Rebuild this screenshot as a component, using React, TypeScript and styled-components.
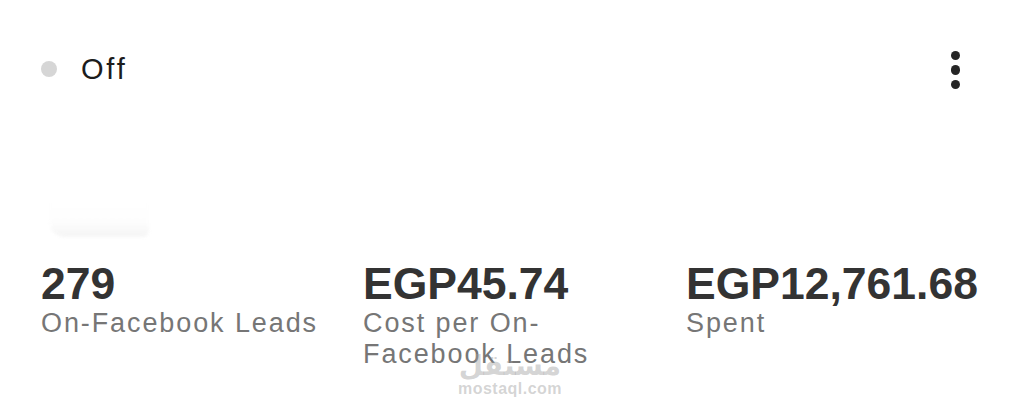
import styled, { createGlobalStyle } from "styled-components";

const GlobalStyle = createGlobalStyle`
  html, body {
    margin: 0;
    padding: 0;
    background: #ffffff;
  }
  body {
    font-family: "Liberation Sans", Arial, sans-serif;
    -webkit-font-smoothing: antialiased;
  }
`;

const Card = styled.div`
  position: relative;
  width: 1017px;
  height: 405px;
  overflow: hidden;
  background: #fff;
  padding: 51px 0 0 41px;
  box-sizing: border-box;
`;

const Header = styled.div`
  display: flex;
  align-items: center;
  justify-content: space-between;
  height: 36px;
  padding-right: 57px;
`;

const Status = styled.div`
  display: flex;
  align-items: center;
  gap: 24px;
`;

const StatusDot = styled.span<{ $on?: boolean }>`
  width: 16px;
  height: 16px;
  border-radius: 50%;
  background: ${(p) => (p.$on ? "#42b72a" : "#d6d6d6")};
`;

const StatusText = styled.span`
  font-size: 29px;
  line-height: 36px;
  letter-spacing: 2.8px;
  color: #1c1c1c;
`;

const MenuButton = styled.button`
  display: flex;
  flex-direction: column;
  align-items: center;
  gap: 5px;
  padding: 0;
  border: 0;
  background: none;
  margin-top: 2px;
`;

const MenuDot = styled.span`
  width: 9.5px;
  height: 9.5px;
  border-radius: 50%;
  background: #262626;
`;

/* faded thumbnail edge under the header */
const Preview = styled.div`
  width: 100px;
  height: 36px;
  margin: 114px 0 22px 8px;
  border-radius: 0 0 6px 16px;
  background: linear-gradient(180deg, #ffffff 0%, #fdfdfd 60%, #f2f2f2 100%);
  filter: blur(1.5px);
  opacity: 0.8;
`;

const Stats = styled.div`
  display: grid;
  grid-template-columns: 322px 323px 322px;
`;

const Stat = styled.div`
  display: flex;
  flex-direction: column;
`;

const Value = styled.div`
  font-size: 44.5px;
  line-height: 49px;
  font-weight: 700;
  color: #333333;
`;

const Label = styled.div`
  font-size: 27px;
  line-height: 31px;
  letter-spacing: 1.9px;
  color: #767676;
  padding-right: 20px;
`;

const Watermark = styled.div`
  position: absolute;
  left: 455px;
  top: 352px;
  width: 110px;
  display: flex;
  flex-direction: column;
  align-items: center;
  color: rgba(160, 160, 160, 0.45);
  pointer-events: none;
`;

const WatermarkLogo = styled.span`
  font-family: "DejaVu Sans", sans-serif;
  font-size: 28px;
  line-height: 28px;
  font-weight: 700;
`;

const WatermarkSite = styled.span`
  font-size: 16px;
  line-height: 18px;
  font-weight: 700;
  letter-spacing: 0.5px;
`;

const stats = [
  { value: "279", label: "On-Facebook Leads" },
  { value: "EGP45.74", label: "Cost per On-Facebook Leads" },
  { value: "EGP12,761.68", label: "Spent" },
];

const App = () => {
  return (
    <>
      <GlobalStyle />
      <Card>
        <Header>
          <Status>
            <StatusDot />
            <StatusText>Off</StatusText>
          </Status>
          <MenuButton aria-label="More">
            <MenuDot />
            <MenuDot />
            <MenuDot />
          </MenuButton>
        </Header>
        <Preview />
        <Stats>
          {stats.map((s) => (
            <Stat key={s.value}>
              <Value>{s.value}</Value>
              <Label>{s.label}</Label>
            </Stat>
          ))}
        </Stats>
        <Watermark>
          <WatermarkLogo>مستقل</WatermarkLogo>
          <WatermarkSite>mostaql.com</WatermarkSite>
        </Watermark>
      </Card>
    </>
  );
};

export default App;
